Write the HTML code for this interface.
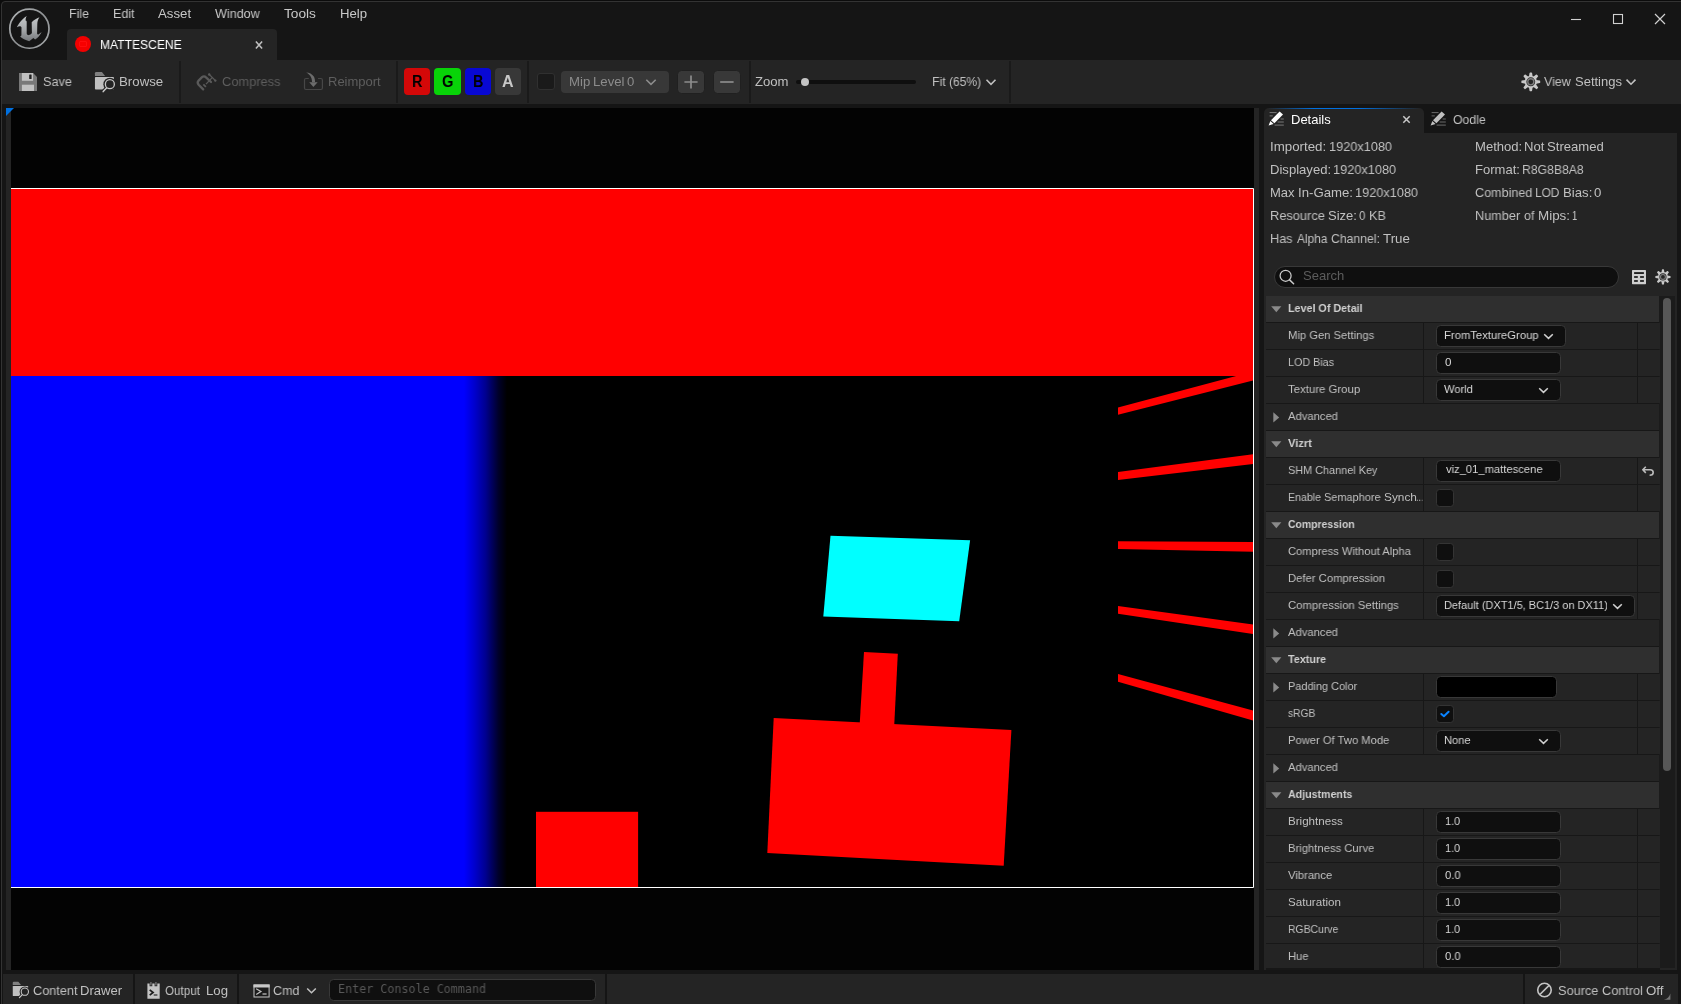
<!DOCTYPE html>
<html lang="en"><head><meta charset="utf-8"><title>MATTESCENE - Unreal Editor</title>
<style>
html,body{margin:0;padding:0;background:#151515;}
body{width:1681px;height:1004px;overflow:hidden;font-family:"Liberation Sans",sans-serif;}
#app{position:relative;width:1681px;height:1004px;overflow:hidden;background:#151515;}
.a{position:absolute;box-sizing:border-box;}
.t{position:absolute;will-change:transform;white-space:nowrap;line-height:1;transform-origin:0 0;font-family:"Liberation Sans",sans-serif;}
.t.b{font-weight:bold;}
.t.m{font-family:"DejaVu Sans Mono","Liberation Mono",monospace;}
svg{position:absolute;overflow:visible;}

</style></head>
<body>
<div id="app">
<!-- window frame -->
<div class="a" style="left:0px;top:0px;width:1681px;height:1004px;background:#0c0c0c;"></div>
<div class="a" style="left:1px;top:1px;width:1690px;height:1010px;background:#151515;border:1px solid #333;border-radius:4px 0 0 0;"></div>
<!-- logo -->
<svg style="left:8px;top:7px" width="43" height="43" viewBox="0 0 43 43">
<defs><linearGradient id="lg" x1="0" y1="0" x2="0" y2="1"><stop offset="0" stop-color="#c6c9cb"/><stop offset="0.55" stop-color="#a4a7a9"/><stop offset="1" stop-color="#74777a"/></linearGradient>
<linearGradient id="lc" x1="0" y1="0" x2="1" y2="1"><stop offset="0" stop-color="#b4b7b9"/><stop offset="0.5" stop-color="#8e9193"/><stop offset="1" stop-color="#a6a9ab"/></linearGradient></defs>
<circle cx="21.4" cy="21.65" r="19.6" fill="none" stroke="url(#lc)" stroke-width="1.7"/>
<path d="M8.9 20.2 C10.2 17.6 13.6 12.2 18.7 9.1 C17.8 10.6 17.5 12.2 17.7 13.7 C18.5 13.5 18.7 14.2 18.7 15 L18.7 26.4 C19 27.6 20 28.3 20.9 28.1 C22 27.9 23.9 26.6 23.9 25.9 L23.7 15.2 C25.5 13.4 28.4 11.2 31.5 10.2 C30 12.2 29.3 14.6 29.3 16.9 L29.1 26.4 C29.2 27.6 30 27.8 30.8 27.2 L33.6 25.1 C32.2 28.4 29.6 31.2 27.1 32.6 L25.4 31.1 L21.2 34.3 C17.6 33.4 14.2 31.6 12.2 29.6 L13.4 28.6 L13.5 20.7 C13.5 19.2 11.4 18.6 8.9 20.2 Z" fill="url(#lg)"/>
</svg>
<!-- menu -->
<span class="t" style="left:69.0px;top:7.1px;font-size:13px;color:#c8c8c8;transform:scaleX(0.9567);">File</span>
<span class="t" style="left:112.8px;top:7.1px;font-size:13px;color:#c8c8c8;transform:scaleX(0.9630);">Edit</span>
<span class="t" style="left:158.0px;top:7.1px;font-size:13px;color:#c8c8c8;transform:scaleX(1.0174);">Asset</span>
<span class="t" style="left:214.8px;top:7.1px;font-size:13px;color:#c8c8c8;transform:scaleX(0.9687);">Window</span>
<span class="t" style="left:283.7px;top:7.1px;font-size:13px;color:#c8c8c8;transform:scaleX(1.0526);">Tools</span>
<span class="t" style="left:339.6px;top:7.1px;font-size:13px;color:#c8c8c8;transform:scaleX(1.0137);">Help</span>
<svg style="left:1565px;top:8px" width="110" height="24" viewBox="1565 8 110 24" fill="none" stroke="#d0d0d0" stroke-width="1.1">
<path d="M1571 19.5H1581"/>
<rect x="1613.5" y="14.5" width="9" height="9"/>
<path d="M1655 14L1665 24M1665 14L1655 24" stroke-width="1.2"/>
</svg>
<!-- asset tab -->
<div class="a" style="left:67px;top:29px;width:210px;height:32px;background:#242424;border-radius:4px 4px 0 0;"></div>
<div class="a" style="left:74.9px;top:35.9px;width:16.1px;height:16.1px;background:#f20000;border-radius:50%;"></div>
<div class="a" style="left:79px;top:40.5px;width:8px;height:6.5px;background:#f80000;border:1px solid #ff0c0c;border-radius:1px;"></div>
<span class="t" style="left:100.0px;top:37.8px;font-size:13px;color:#ffffff;transform:scaleX(0.9295);">MATTESCENE</span>
<svg style="left:254px;top:39.5px" width="10" height="10" viewBox="0 0 10 10"><path d="M1.9 1.5L8.1 8.5M8.1 1.5L1.9 8.5" stroke="#c0c0c0" stroke-width="1.55" fill="none"/></svg>
<!-- toolbar -->
<div class="a" style="left:2px;top:60px;width:1679px;height:44px;background:#242424;"></div>
<div class="a" style="left:179px;top:61px;width:2px;height:42px;background:#1a1a1a;"></div>
<div class="a" style="left:396px;top:61px;width:2px;height:42px;background:#1a1a1a;"></div>
<div class="a" style="left:527px;top:61px;width:2px;height:42px;background:#1a1a1a;"></div>
<div class="a" style="left:749px;top:61px;width:2px;height:42px;background:#1a1a1a;"></div>
<div class="a" style="left:1009px;top:61px;width:2px;height:42px;background:#1a1a1a;"></div>
<svg style="left:19px;top:73px" width="18" height="18" viewBox="0 0 18 18">
<path d="M0 0H14.1L18 4V18H0Z" fill="#787878"/>
<rect x="2.9" y="0" width="11.2" height="7.8" fill="#c0c0c0"/>
<rect x="10.2" y="1.4" width="2.4" height="4.5" rx="0.5" fill="#202020"/>
<rect x="2.9" y="11.7" width="12.1" height="6.3" fill="#c0c0c0"/>
</svg>
<span class="t" style="left:42.5px;top:75.0px;font-size:13px;color:#c0c0c0;transform:scaleX(0.9730);">Save</span>
<svg style="left:94px;top:71px" width="22" height="22" viewBox="0 0 22 22">
<path d="M0.95 4.9V2.2Q0.95 1 2.2 1H7.9L11.1 4.9Z" fill="#808080"/>
<rect x="0.95" y="6.05" width="18.95" height="12.55" rx="0.8" fill="#c0c0c0"/>
<circle cx="15.87" cy="13.22" r="6.5" fill="#242424"/>
<path d="M12.6 17L9 20.8" stroke="#242424" stroke-width="3.8" stroke-linecap="round"/>
<circle cx="15.87" cy="13.22" r="4.5" fill="none" stroke="#c8c8c8" stroke-width="1.3"/>
<path d="M12.5 17.1L9.2 20.6" stroke="#c8c8c8" stroke-width="1.5" stroke-linecap="round"/>
</svg>
<span class="t" style="left:118.7px;top:75.0px;font-size:13px;color:#c0c0c0;transform:scaleX(1.0208);">Browse</span>
<svg style="left:196px;top:72px" width="22" height="19" viewBox="0 0 22 19" fill="none" stroke="#5a5a5a">
<path d="M15 10L10 5.4C8.8 4.2 7.2 4.2 6 5.2L2.6 8.6C1.4 10 1.4 11.4 2.6 12.8L7.2 17.4" stroke-width="2.3" stroke-linecap="round"/>
<path d="M10 12.1L16.2 5.6" stroke-width="1.3"/>
<path d="M7.3 12.4L9.9 14.8" stroke-width="1.8"/>
<path d="M12.8 2L19.8 9" stroke-width="1.1"/>
<circle cx="13.2" cy="2.5" r="1.2" fill="#5a5a5a" stroke="none"/><circle cx="19.3" cy="8.6" r="1.2" fill="#5a5a5a" stroke="none"/>
</svg>
<span class="t" style="left:221.5px;top:75.0px;font-size:13px;color:#5e5e5e;transform:scaleX(0.9872);">Compress</span>
<svg style="left:303px;top:71px" width="21" height="20" viewBox="0 0 21 20" fill="none">
<path d="M5.75 7.5H3C2 7.5 1.5 8 1.5 9V17C1.5 18 2 18.5 3 18.5H17.9C18.9 18.5 19.4 18 19.4 17V9C19.4 8 18.9 7.5 17.9 7.5H15" stroke="#474747" stroke-width="1.2"/>
<path d="M3.07 1.42C6 1.4 9.34 3 10.8 5.6C11.8 7.4 12.03 9 12.03 11.3L9.04 11.3C9 8.6 8.4 6.4 7 4.6C6 3.2 4.6 2 3.07 1.42Z" fill="#6c6c6c"/>
<path d="M6.2 11.2H14.6L10.4 16.1Z" fill="#6c6c6c"/>
</svg>
<span class="t" style="left:328.0px;top:75.0px;font-size:13px;color:#5e5e5e;transform:scaleX(0.9914);">Reimport</span>
<div class="a" style="left:404px;top:68px;width:26px;height:27px;background:#d40808;border-radius:4px;"></div>
<div class="a" style="left:434px;top:68px;width:27px;height:27px;background:#08d408;border-radius:4px;"></div>
<div class="a" style="left:465px;top:68px;width:26px;height:27px;background:#0808d4;border-radius:4px;"></div>
<div class="a" style="left:495px;top:68px;width:26px;height:27px;background:#383838;border-radius:4px;"></div>
<span class="t b" style="left:411.9px;top:73.7px;font-size:16px;color:#000;transform:scaleX(0.9020);">R</span>
<span class="t b" style="left:442.1px;top:73.7px;font-size:16px;color:#000;transform:scaleX(0.9133);">G</span>
<span class="t b" style="left:473.1px;top:73.7px;font-size:16px;color:#000;transform:scaleX(0.8980);">B</span>
<span class="t b" style="left:502.4px;top:73.7px;font-size:16px;color:#c8c8c8;transform:scaleX(0.9665);">A</span>
<div class="a" style="left:537.2px;top:73.3px;width:17.4px;height:17.2px;background:#1a1a1a;border:1px solid #303030;border-radius:3px;"></div>
<div class="a" style="left:561px;top:71px;width:108px;height:22px;background:#383838;border-radius:4px;"></div>
<span class="t" style="left:568.6px;top:75.0px;font-size:13px;color:#8c8c8c;transform:scaleX(1.0119);">Mip</span><span class="t" style="left:592.8px;top:75.0px;font-size:13px;color:#8c8c8c;transform:scaleX(1.0142);">Level</span><span class="t" style="left:627.0px;top:75.0px;font-size:13px;color:#8c8c8c;transform:scaleX(1.0096);">0</span>
<svg style="left:645px;top:78px" width="12" height="8" viewBox="0 0 12 8"><path d="M1.3 1.8L6 6.4L10.7 1.8" fill="none" stroke="#8c8c8c" stroke-width="1.6"/></svg>
<div class="a" style="left:677px;top:69.8px;width:28px;height:24.4px;background:#383838;border:1px solid #202020;border-radius:4.5px;"></div>
<div class="a" style="left:713px;top:69.8px;width:28px;height:24.4px;background:#383838;border:1px solid #202020;border-radius:4.5px;"></div>
<svg style="left:684px;top:75px" width="14" height="14" viewBox="0 0 14 14"><path d="M7 0.4V13.6M0.4 7H13.6" stroke="#8c8c8c" stroke-width="1.7" fill="none"/></svg>
<svg style="left:720px;top:75px" width="14" height="14" viewBox="0 0 14 14"><path d="M0.2 7H13.6" stroke="#8c8c8c" stroke-width="1.7" fill="none"/></svg>
<span class="t" style="left:755.3px;top:75.1px;font-size:13px;color:#c0c0c0;transform:scaleX(1.0100);">Zoom</span>
<div class="a" style="left:796px;top:80px;width:120px;height:4px;background:#0f0f0f;border-radius:2px;"></div>
<div class="a" style="left:800.6px;top:77.6px;width:8.6px;height:8.6px;background:#c4c4c4;border-radius:50%;"></div>
<span class="t" style="left:931.6px;top:75.1px;font-size:13px;color:#c0c0c0;transform:scaleX(0.9531);">Fit</span><span class="t" style="left:949.2px;top:75.1px;font-size:13px;color:#c0c0c0;transform:scaleX(0.9270);">(65%)</span>
<svg style="left:985px;top:78px" width="12" height="8" viewBox="0 0 12 8"><path d="M1.5 1.8L6 6.3L10.5 1.8" fill="none" stroke="#c0c0c0" stroke-width="1.6"/></svg>
<svg style="left:1520.6px;top:72.15px" width="19.6" height="19.6" viewBox="-10 -10 20 20">
<g fill="#c8c8c8"><path d="M-1.9 -5.4L-1.3 -9.1Q-1.25 -9.6 -0.7 -9.6H0.7Q1.25 -9.6 1.3 -9.1L1.9 -5.4Z" transform="rotate(0)"/><path d="M-1.9 -5.4L-1.3 -9.1Q-1.25 -9.6 -0.7 -9.6H0.7Q1.25 -9.6 1.3 -9.1L1.9 -5.4Z" transform="rotate(45)"/><path d="M-1.9 -5.4L-1.3 -9.1Q-1.25 -9.6 -0.7 -9.6H0.7Q1.25 -9.6 1.3 -9.1L1.9 -5.4Z" transform="rotate(90)"/><path d="M-1.9 -5.4L-1.3 -9.1Q-1.25 -9.6 -0.7 -9.6H0.7Q1.25 -9.6 1.3 -9.1L1.9 -5.4Z" transform="rotate(135)"/><path d="M-1.9 -5.4L-1.3 -9.1Q-1.25 -9.6 -0.7 -9.6H0.7Q1.25 -9.6 1.3 -9.1L1.9 -5.4Z" transform="rotate(180)"/><path d="M-1.9 -5.4L-1.3 -9.1Q-1.25 -9.6 -0.7 -9.6H0.7Q1.25 -9.6 1.3 -9.1L1.9 -5.4Z" transform="rotate(225)"/><path d="M-1.9 -5.4L-1.3 -9.1Q-1.25 -9.6 -0.7 -9.6H0.7Q1.25 -9.6 1.3 -9.1L1.9 -5.4Z" transform="rotate(270)"/><path d="M-1.9 -5.4L-1.3 -9.1Q-1.25 -9.6 -0.7 -9.6H0.7Q1.25 -9.6 1.3 -9.1L1.9 -5.4Z" transform="rotate(315)"/></g>
<circle r="5.4" fill="none" stroke="#c8c8c8" stroke-width="1.75"/>
<circle r="3.1" fill="none" stroke="#7e7e7e" stroke-width="1.4"/>
</svg>
<span class="t" style="left:1544.3px;top:75.1px;font-size:13px;color:#c0c0c0;transform:scaleX(0.9578);">View</span><span class="t" style="left:1575.3px;top:75.1px;font-size:13px;color:#c0c0c0;transform:scaleX(0.9932);">Settings</span>
<svg style="left:1625px;top:78px" width="12" height="8" viewBox="0 0 12 8"><path d="M1.5 1.6L6 6.2L10.5 1.6" fill="none" stroke="#c0c0c0" stroke-width="1.6"/></svg>
<!-- viewport panel -->
<div class="a" style="left:6px;top:108px;width:1253px;height:862px;background:#242424;"></div>
<svg style="left:11px;top:108px" width="1243" height="862" viewBox="11 108 1243 862" shape-rendering="geometricPrecision">
<defs><linearGradient id="bl" gradientUnits="userSpaceOnUse" x1="464" y1="0" x2="507" y2="0">
<stop offset="0" stop-color="#0000ff"/><stop offset="0.25" stop-color="#0000cc"/><stop offset="0.5" stop-color="#000090"/><stop offset="0.8" stop-color="#00002a"/><stop offset="1" stop-color="#000000"/></linearGradient></defs>
<rect x="11" y="108" width="1243" height="862" fill="#030303"/>
<rect x="11" y="189" width="1242" height="698" fill="#000000"/>
<rect x="11" y="376" width="500" height="511" fill="url(#bl)"/>
<rect x="11" y="189" width="1242" height="187" fill="#ff0000"/>
<polygon points="830.5,535.8 970.1,540.2 959.2,621.2 823.3,616.6" fill="#00ffff"/>
<polygon points="864,652.1 897.8,653.7 894.2,726 859.7,724" fill="#ff0000"/>
<polygon points="773.7,718 1011.4,729.9 1003.7,865.8 767.3,852.9" fill="#ff0000"/>
<rect x="536" y="811.8" width="102.1" height="76" fill="#ff0000"/>
<polygon points="1118,407.6 1253,371.4 1253,380.5 1118,414.8" fill="#ff0000"/>
<polygon points="1118,472 1253,454.3 1253,464 1118,480" fill="#ff0000"/>
<polygon points="1118,541.2 1253,541.9 1253,551.8 1118,548.9" fill="#ff0000"/>
<polygon points="1118,606.1 1253,624.5 1253,633.9 1118,613.8" fill="#ff0000"/>
<polygon points="1118,674 1253,710.6 1253,720.4 1118,681.7" fill="#ff0000"/>
<path d="M11 188.5H1253.5V887.5H11" fill="none" stroke="#ffffff" stroke-width="1"/>
</svg>
<svg style="left:6px;top:108px" width="8" height="8" viewBox="0 0 8 8"><path d="M0 0H8L0 8Z" fill="#0070e0"/></svg>
<!-- details panel -->
<div class="a" style="left:1264px;top:108px;width:160px;height:26px;background:#242424;border-radius:5px 5px 0 0;"></div>
<div class="a" style="left:1268px;top:108px;width:152px;height:1px;background:transparent;background:linear-gradient(90deg,rgba(0,112,224,0) 0,#0070e0 30%,#0070e0 60%,rgba(0,112,224,0) 100%);"></div>
<div class="a" style="left:1264px;top:133px;width:413px;height:837px;background:#242424;"></div>
<svg style="left:1268.2px;top:111.4px" width="17" height="16" viewBox="0 0 17 16">
<g stroke="#787878" stroke-width="1" fill="none"><path d="M1.6 1.6H8.6M1.6 4.9H4.8M12.6 8H15.8M9.6 11H15.8M6.6 14.1H15.8"/></g>
<path d="M11.6 0.6L15 3.6L6.4 12.2L3 9.2Z" fill="#ffffff"/>
<path d="M2.4 9.9L5.6 12.9L0.6 14.6Z" fill="#ffffff"/>
</svg>
<span class="t" style="left:1291.2px;top:112.7px;font-size:13px;color:#ffffff;transform:scaleX(0.9934);">Details</span>
<svg style="left:1402px;top:115px" width="9" height="9" viewBox="0 0 9 9"><path d="M1.3 1.3L7.7 7.7M7.7 1.3L1.3 7.7" stroke="#c8c8c8" stroke-width="1.5" fill="none"/></svg>
<svg style="left:1430.3px;top:111.4px" width="17" height="16" viewBox="0 0 17 16">
<g stroke="#6a6a6a" stroke-width="1" fill="none"><path d="M1.6 1.6H8.6M1.6 4.9H4.8M12.6 8H15.8M9.6 11H15.8M6.6 14.1H15.8"/></g>
<path d="M11.6 0.6L15 3.6L6.4 12.2L3 9.2Z" fill="#c0c0c0"/>
<path d="M2.4 9.9L5.6 12.9L0.6 14.6Z" fill="#c0c0c0"/>
</svg>
<span class="t" style="left:1453.0px;top:112.7px;font-size:13px;color:#c0c0c0;transform:scaleX(0.9451);">Oodle</span>
<span class="t" style="left:1269.6px;top:139.9px;font-size:13px;color:#c0c0c0;transform:scaleX(1.0222);">Imported:</span><span class="t" style="left:1328.5px;top:139.9px;font-size:13px;color:#c0c0c0;transform:scaleX(0.9792);">1920x1080</span>
<span class="t" style="left:1269.7px;top:162.9px;font-size:13px;color:#c0c0c0;transform:scaleX(1.0060);">Displayed:</span><span class="t" style="left:1333.4px;top:162.9px;font-size:13px;color:#c0c0c0;transform:scaleX(0.9808);">1920x1080</span>
<span class="t" style="left:1269.7px;top:185.9px;font-size:13px;color:#c0c0c0;transform:scaleX(0.9829);">Max</span><span class="t" style="left:1297.6px;top:185.9px;font-size:13px;color:#c0c0c0;transform:scaleX(1.0157);">In-Game:</span><span class="t" style="left:1355.4px;top:185.9px;font-size:13px;color:#c0c0c0;transform:scaleX(0.9792);">1920x1080</span>
<span class="t" style="left:1269.7px;top:208.9px;font-size:13px;color:#c0c0c0;transform:scaleX(0.9858);">Resource</span><span class="t" style="left:1328.1px;top:208.9px;font-size:13px;color:#c0c0c0;transform:scaleX(0.9857);">Size:</span><span class="t" style="left:1359.1px;top:208.9px;font-size:13px;color:#c0c0c0;transform:scaleX(0.8894);">0</span><span class="t" style="left:1368.7px;top:208.9px;font-size:13px;color:#c0c0c0;transform:scaleX(0.9691);">KB</span>
<span class="t" style="left:1269.7px;top:231.9px;font-size:13px;color:#c0c0c0;transform:scaleX(0.9740);">Has</span><span class="t" style="left:1296.6px;top:231.9px;font-size:13px;color:#c0c0c0;transform:scaleX(0.9150);">Alpha</span><span class="t" style="left:1331.4px;top:231.9px;font-size:13px;color:#c0c0c0;transform:scaleX(0.9410);">Channel:</span><span class="t" style="left:1383.1px;top:231.9px;font-size:13px;color:#c0c0c0;transform:scaleX(1.0250);">True</span>
<span class="t" style="left:1474.8px;top:139.9px;font-size:13px;color:#c0c0c0;transform:scaleX(1.0044);">Method:</span><span class="t" style="left:1523.7px;top:139.9px;font-size:13px;color:#c0c0c0;transform:scaleX(1.0047);">Not</span><span class="t" style="left:1547.1px;top:139.9px;font-size:13px;color:#c0c0c0;transform:scaleX(1.0090);">Streamed</span>
<span class="t" style="left:1474.8px;top:162.9px;font-size:13px;color:#c0c0c0;transform:scaleX(1.0018);">Format:</span><span class="t" style="left:1521.7px;top:162.9px;font-size:13px;color:#c0c0c0;transform:scaleX(0.9387);">R8G8B8A8</span>
<span class="t" style="left:1475.0px;top:185.9px;font-size:13px;color:#c0c0c0;transform:scaleX(0.9682);">Combined</span><span class="t" style="left:1535.0px;top:185.9px;font-size:13px;color:#c0c0c0;transform:scaleX(0.9127);">LOD</span><span class="t" style="left:1562.5px;top:185.9px;font-size:13px;color:#c0c0c0;transform:scaleX(1.0138);">Bias:</span><span class="t" style="left:1594.1px;top:185.9px;font-size:13px;color:#c0c0c0;transform:scaleX(1.0176);">0</span>
<span class="t" style="left:1474.8px;top:208.9px;font-size:13px;color:#c0c0c0;transform:scaleX(0.9749);">Number</span><span class="t" style="left:1524.1px;top:208.9px;font-size:13px;color:#c0c0c0;transform:scaleX(0.9531);">of</span><span class="t" style="left:1537.7px;top:208.9px;font-size:13px;color:#c0c0c0;transform:scaleX(1.0308);">Mips:</span><span class="t" style="left:1572.4px;top:208.9px;font-size:13px;color:#c0c0c0;transform:scaleX(0.7203);">1</span>
<div class="a" style="left:1274px;top:266px;width:344.8px;height:22px;background:#0f0f0f;border:1px solid #383838;border-radius:11px;"></div>
<svg style="left:1279px;top:269px" width="16" height="16" viewBox="0 0 16 16"><circle cx="6.6" cy="6.75" r="5.5" fill="none" stroke="#cacaca" stroke-width="1.25"/><path d="M10.6 10.9L14.6 14.8" stroke="#cacaca" stroke-width="1.5" stroke-linecap="round"/></svg>
<span class="t" style="left:1302.5px;top:268.8px;font-size:13px;color:#5c5c5c;transform:scaleX(1.0030);">Search</span>
<svg style="left:1632px;top:270px" width="14" height="14.2" viewBox="0 0 14 14.2"><rect x="0" y="0" width="14" height="14.2" rx="0.6" fill="#cfcfcf"/><g fill="#0c0c0c"><rect x="2.1" y="2.2" width="9.8" height="1.7"/><rect x="2.1" y="6.2" width="3.7" height="1.6"/><rect x="8.1" y="6.2" width="3.8" height="1.6"/><rect x="2.1" y="10.2" width="3.7" height="1.6"/><rect x="8.1" y="10.2" width="3.8" height="1.6"/></g></svg>
<svg style="left:1655.05px;top:268.65px" width="15.9" height="15.9" viewBox="-10 -10 20 20">
<g fill="#c8c8c8"><path d="M-1.9 -5.4L-1.3 -9.1Q-1.25 -9.6 -0.7 -9.6H0.7Q1.25 -9.6 1.3 -9.1L1.9 -5.4Z" transform="rotate(0)"/><path d="M-1.9 -5.4L-1.3 -9.1Q-1.25 -9.6 -0.7 -9.6H0.7Q1.25 -9.6 1.3 -9.1L1.9 -5.4Z" transform="rotate(45)"/><path d="M-1.9 -5.4L-1.3 -9.1Q-1.25 -9.6 -0.7 -9.6H0.7Q1.25 -9.6 1.3 -9.1L1.9 -5.4Z" transform="rotate(90)"/><path d="M-1.9 -5.4L-1.3 -9.1Q-1.25 -9.6 -0.7 -9.6H0.7Q1.25 -9.6 1.3 -9.1L1.9 -5.4Z" transform="rotate(135)"/><path d="M-1.9 -5.4L-1.3 -9.1Q-1.25 -9.6 -0.7 -9.6H0.7Q1.25 -9.6 1.3 -9.1L1.9 -5.4Z" transform="rotate(180)"/><path d="M-1.9 -5.4L-1.3 -9.1Q-1.25 -9.6 -0.7 -9.6H0.7Q1.25 -9.6 1.3 -9.1L1.9 -5.4Z" transform="rotate(225)"/><path d="M-1.9 -5.4L-1.3 -9.1Q-1.25 -9.6 -0.7 -9.6H0.7Q1.25 -9.6 1.3 -9.1L1.9 -5.4Z" transform="rotate(270)"/><path d="M-1.9 -5.4L-1.3 -9.1Q-1.25 -9.6 -0.7 -9.6H0.7Q1.25 -9.6 1.3 -9.1L1.9 -5.4Z" transform="rotate(315)"/></g>
<circle r="5.4" fill="none" stroke="#c8c8c8" stroke-width="1.75"/>
<circle r="3.1" fill="none" stroke="#7e7e7e" stroke-width="1.4"/>
</svg>
<div class="a" style="left:1266px;top:296px;width:394px;height:674px;background:#171717;"></div>
<div class="a" style="left:1659px;top:296px;width:16px;height:672px;background:#1b1b1b;"></div>
<div class="a" style="left:1663px;top:298px;width:8px;height:473px;background:#575757;border-radius:4px;"></div>
<div class="a" style="left:1266px;top:296px;width:393px;height:26px;background:#2f2f2f;"></div>
<svg style="left:1271px;top:306px" width="11" height="7" viewBox="0 0 11 7"><path d="M0.2 0.3H10.4L5.3 6.3Z" fill="#8a8a8a"/></svg>
<span class="t b" style="left:1287.8px;top:302.1px;font-size:11.6px;color:#d0d0d0;transform:scaleX(0.9263);">Level Of Detail</span>
<div class="a" style="left:1266px;top:323px;width:157px;height:26px;background:#242424;"></div>
<div class="a" style="left:1424px;top:323px;width:213px;height:26px;background:#242424;"></div>
<div class="a" style="left:1638px;top:323px;width:22px;height:26px;background:#242424;"></div>
<span class="t" style="left:1287.6px;top:329.1px;font-size:11.6px;color:#c0c0c0;transform:scaleX(0.9688);">Mip Gen Settings</span>
<div class="a" style="left:1436px;top:325px;width:129.69999999999996px;height:22px;background:#0f0f0f;border:1px solid #383838;border-radius:4.5px;"></div>
<span class="t" style="left:1443.9px;top:329.1px;font-size:11.6px;color:#d8d8d8;transform:scaleX(0.9726);">FromTextureGroup</span>
<svg style="left:1543px;top:333px" width="11" height="7" viewBox="0 0 11 7"><path d="M1.2 1.2L5.5 5.4L9.8 1.2" fill="none" stroke="#d0d0d0" stroke-width="1.5"/></svg>
<div class="a" style="left:1266px;top:350px;width:157px;height:26px;background:#242424;"></div>
<div class="a" style="left:1424px;top:350px;width:213px;height:26px;background:#242424;"></div>
<div class="a" style="left:1638px;top:350px;width:22px;height:26px;background:#242424;"></div>
<span class="t" style="left:1287.6px;top:356.1px;font-size:11.6px;color:#c0c0c0;transform:scaleX(0.9293);">LOD Bias</span>
<div class="a" style="left:1436px;top:352px;width:124.99999999999991px;height:22px;background:#0f0f0f;border:1px solid #383838;border-radius:4.5px;"></div>
<span class="t" style="left:1445.1px;top:356.1px;font-size:11.6px;color:#d8d8d8;transform:scaleX(0.9878);">0</span>
<div class="a" style="left:1266px;top:377px;width:157px;height:26px;background:#242424;"></div>
<div class="a" style="left:1424px;top:377px;width:213px;height:26px;background:#242424;"></div>
<div class="a" style="left:1638px;top:377px;width:22px;height:26px;background:#242424;"></div>
<span class="t" style="left:1287.6px;top:383.1px;font-size:11.6px;color:#c0c0c0;transform:scaleX(0.9837);">Texture Group</span>
<div class="a" style="left:1436px;top:379px;width:124.99999999999991px;height:22px;background:#0f0f0f;border:1px solid #383838;border-radius:4.5px;"></div>
<span class="t" style="left:1443.8px;top:383.1px;font-size:11.6px;color:#d8d8d8;transform:scaleX(0.9618);">World</span>
<svg style="left:1538px;top:387px" width="11" height="7" viewBox="0 0 11 7"><path d="M1.2 1.2L5.5 5.4L9.8 1.2" fill="none" stroke="#d0d0d0" stroke-width="1.5"/></svg>
<div class="a" style="left:1266px;top:404px;width:393px;height:26px;background:#242424;"></div>
<svg style="left:1272.6px;top:411.5px" width="7" height="11" viewBox="0 0 7 11"><path d="M0.3 0.3L6.2 5.4L0.3 10.5Z" fill="#8a8a8a"/></svg>
<span class="t" style="left:1287.8px;top:410.1px;font-size:11.6px;color:#c0c0c0;transform:scaleX(0.9692);">Advanced</span>
<div class="a" style="left:1266px;top:431px;width:393px;height:26px;background:#2f2f2f;"></div>
<svg style="left:1271px;top:441px" width="11" height="7" viewBox="0 0 11 7"><path d="M0.2 0.3H10.4L5.3 6.3Z" fill="#8a8a8a"/></svg>
<span class="t b" style="left:1287.7px;top:437.1px;font-size:11.6px;color:#d0d0d0;transform:scaleX(0.9621);">Vizrt</span>
<div class="a" style="left:1266px;top:458px;width:157px;height:26px;background:#242424;"></div>
<div class="a" style="left:1424px;top:458px;width:213px;height:26px;background:#242424;"></div>
<div class="a" style="left:1638px;top:458px;width:22px;height:26px;background:#242424;"></div>
<span class="t" style="left:1288.0px;top:464.1px;font-size:11.6px;color:#c0c0c0;transform:scaleX(0.9377);">SHM Channel Key</span>
<div class="a" style="left:1436px;top:460px;width:124.99999999999991px;height:22px;background:#0f0f0f;border:1px solid #383838;border-radius:4.5px;"></div>
<span class="t" style="left:1445.6px;top:463.3px;font-size:11.6px;color:#d8d8d8;transform:scaleX(0.9667);">viz_01_mattescene</span>
<svg style="left:1642px;top:466px" width="13" height="11" viewBox="0 0 13 11"><path d="M3.8 0.7L0.8 3.8L3.8 6.9M1.1 3.8H8.2C10.1 3.8 11.2 5 11.2 6.6C11.2 8.2 10 9.3 7.6 9.3" fill="none" stroke="#bcbcbc" stroke-width="1.6" stroke-linejoin="round"/></svg>
<div class="a" style="left:1266px;top:485px;width:157px;height:26px;background:#242424;"></div>
<div class="a" style="left:1424px;top:485px;width:213px;height:26px;background:#242424;"></div>
<div class="a" style="left:1638px;top:485px;width:22px;height:26px;background:#242424;"></div>
<span class="t" style="left:1287.8px;top:491.1px;font-size:11.6px;color:#c0c0c0;transform:scaleX(0.9111);">Enable</span><span class="t" style="left:1324.0px;top:491.1px;font-size:11.6px;color:#c0c0c0;transform:scaleX(0.9431);">Semaphore</span><span class="t" style="left:1384.0px;top:491.1px;font-size:11.6px;color:#c0c0c0;transform:scaleX(1.0203);">Synch</span><span class="t" style="left:1416.4px;top:491.1px;font-size:11.6px;color:#c0c0c0;transform:scaleX(0.6377);">…</span>
<div class="a" style="left:1436px;top:489px;width:18px;height:18px;background:#0f0f0f;border:1px solid #343434;border-radius:3.5px;"></div>
<div class="a" style="left:1266px;top:512px;width:393px;height:26px;background:#2f2f2f;"></div>
<svg style="left:1271px;top:522px" width="11" height="7" viewBox="0 0 11 7"><path d="M0.2 0.3H10.4L5.3 6.3Z" fill="#8a8a8a"/></svg>
<span class="t b" style="left:1288.1px;top:518.1px;font-size:11.6px;color:#d0d0d0;transform:scaleX(0.8991);">Compression</span>
<div class="a" style="left:1266px;top:539px;width:157px;height:26px;background:#242424;"></div>
<div class="a" style="left:1424px;top:539px;width:213px;height:26px;background:#242424;"></div>
<div class="a" style="left:1638px;top:539px;width:22px;height:26px;background:#242424;"></div>
<span class="t" style="left:1287.9px;top:545.1px;font-size:11.6px;color:#c0c0c0;transform:scaleX(0.9622);">Compress Without Alpha</span>
<div class="a" style="left:1436px;top:543px;width:18px;height:18px;background:#0f0f0f;border:1px solid #343434;border-radius:3.5px;"></div>
<div class="a" style="left:1266px;top:566px;width:157px;height:26px;background:#242424;"></div>
<div class="a" style="left:1424px;top:566px;width:213px;height:26px;background:#242424;"></div>
<div class="a" style="left:1638px;top:566px;width:22px;height:26px;background:#242424;"></div>
<span class="t" style="left:1287.6px;top:572.1px;font-size:11.6px;color:#c0c0c0;transform:scaleX(0.9720);">Defer Compression</span>
<div class="a" style="left:1436px;top:570px;width:18px;height:18px;background:#0f0f0f;border:1px solid #343434;border-radius:3.5px;"></div>
<div class="a" style="left:1266px;top:593px;width:157px;height:26px;background:#242424;"></div>
<div class="a" style="left:1424px;top:593px;width:213px;height:26px;background:#242424;"></div>
<div class="a" style="left:1638px;top:593px;width:22px;height:26px;background:#242424;"></div>
<span class="t" style="left:1287.9px;top:599.1px;font-size:11.6px;color:#c0c0c0;transform:scaleX(0.9770);">Compression Settings</span>
<div class="a" style="left:1436px;top:595px;width:198.69999999999996px;height:22px;background:#0f0f0f;border:1px solid #383838;border-radius:4.5px;"></div>
<span class="t" style="left:1443.7px;top:599.1px;font-size:11.6px;color:#d8d8d8;transform:scaleX(0.9465);">Default (DXT1/5, BC1/3 on DX11)</span><div class="a" style="left:1607.4px;top:597.3px;width:5px;height:15.6px;background:#0f0f0f;"></div>
<svg style="left:1611.8px;top:603px" width="11" height="7" viewBox="0 0 11 7"><path d="M1.2 1.2L5.5 5.4L9.8 1.2" fill="none" stroke="#d0d0d0" stroke-width="1.5"/></svg>
<div class="a" style="left:1266px;top:620px;width:393px;height:26px;background:#242424;"></div>
<svg style="left:1272.6px;top:627.5px" width="7" height="11" viewBox="0 0 7 11"><path d="M0.3 0.3L6.2 5.4L0.3 10.5Z" fill="#8a8a8a"/></svg>
<span class="t" style="left:1287.8px;top:626.1px;font-size:11.6px;color:#c0c0c0;transform:scaleX(0.9692);">Advanced</span>
<div class="a" style="left:1266px;top:647px;width:393px;height:26px;background:#2f2f2f;"></div>
<svg style="left:1271px;top:657px" width="11" height="7" viewBox="0 0 11 7"><path d="M0.2 0.3H10.4L5.3 6.3Z" fill="#8a8a8a"/></svg>
<span class="t b" style="left:1287.7px;top:653.1px;font-size:11.6px;color:#d0d0d0;transform:scaleX(0.9299);">Texture</span>
<div class="a" style="left:1266px;top:674px;width:157px;height:26px;background:#242424;"></div>
<div class="a" style="left:1424px;top:674px;width:213px;height:26px;background:#242424;"></div>
<div class="a" style="left:1638px;top:674px;width:22px;height:26px;background:#242424;"></div>
<svg style="left:1272.6px;top:681.5px" width="7" height="11" viewBox="0 0 7 11"><path d="M0.3 0.3L6.2 5.4L0.3 10.5Z" fill="#8a8a8a"/></svg>
<span class="t" style="left:1287.6px;top:680.1px;font-size:11.6px;color:#c0c0c0;transform:scaleX(0.9418);">Padding Color</span>
<div class="a" style="left:1436px;top:676px;width:121px;height:22px;background:#000000;border:1px solid #383838;border-radius:4.5px;"></div>
<div class="a" style="left:1266px;top:701px;width:157px;height:26px;background:#242424;"></div>
<div class="a" style="left:1424px;top:701px;width:213px;height:26px;background:#242424;"></div>
<div class="a" style="left:1638px;top:701px;width:22px;height:26px;background:#242424;"></div>
<span class="t" style="left:1288.2px;top:707.1px;font-size:11.6px;color:#c0c0c0;transform:scaleX(0.8829);">sRGB</span>
<div class="a" style="left:1436px;top:705px;width:18px;height:18px;background:#0f0f0f;border:1px solid #343434;border-radius:3.5px;"></div><svg style="left:1440px;top:709px" width="10" height="9" viewBox="0 0 10 9"><path d="M1.3 5L3.9 7.2L8.6 2.7" fill="none" stroke="#0a84ff" stroke-width="2" stroke-linecap="round" stroke-linejoin="round"/></svg>
<div class="a" style="left:1266px;top:728px;width:157px;height:26px;background:#242424;"></div>
<div class="a" style="left:1424px;top:728px;width:213px;height:26px;background:#242424;"></div>
<div class="a" style="left:1638px;top:728px;width:22px;height:26px;background:#242424;"></div>
<span class="t" style="left:1287.6px;top:734.1px;font-size:11.6px;color:#c0c0c0;transform:scaleX(0.9667);">Power Of Two Mode</span>
<div class="a" style="left:1436px;top:730px;width:124.99999999999991px;height:22px;background:#0f0f0f;border:1px solid #383838;border-radius:4.5px;"></div>
<span class="t" style="left:1443.6px;top:734.1px;font-size:11.6px;color:#d8d8d8;transform:scaleX(0.9619);">None</span>
<svg style="left:1538px;top:738px" width="11" height="7" viewBox="0 0 11 7"><path d="M1.2 1.2L5.5 5.4L9.8 1.2" fill="none" stroke="#d0d0d0" stroke-width="1.5"/></svg>
<div class="a" style="left:1266px;top:755px;width:393px;height:26px;background:#242424;"></div>
<svg style="left:1272.6px;top:762.5px" width="7" height="11" viewBox="0 0 7 11"><path d="M0.3 0.3L6.2 5.4L0.3 10.5Z" fill="#8a8a8a"/></svg>
<span class="t" style="left:1287.8px;top:761.1px;font-size:11.6px;color:#c0c0c0;transform:scaleX(0.9692);">Advanced</span>
<div class="a" style="left:1266px;top:782px;width:393px;height:26px;background:#2f2f2f;"></div>
<svg style="left:1271px;top:792px" width="11" height="7" viewBox="0 0 11 7"><path d="M0.2 0.3H10.4L5.3 6.3Z" fill="#8a8a8a"/></svg>
<span class="t b" style="left:1287.5px;top:788.1px;font-size:11.6px;color:#d0d0d0;transform:scaleX(0.9164);">Adjustments</span>
<div class="a" style="left:1266px;top:809px;width:157px;height:26px;background:#242424;"></div>
<div class="a" style="left:1424px;top:809px;width:213px;height:26px;background:#242424;"></div>
<div class="a" style="left:1638px;top:809px;width:22px;height:26px;background:#242424;"></div>
<span class="t" style="left:1287.6px;top:815.1px;font-size:11.6px;color:#c0c0c0;transform:scaleX(0.9911);">Brightness</span>
<div class="a" style="left:1436px;top:811px;width:124.99999999999991px;height:22px;background:#0f0f0f;border:1px solid #383838;border-radius:4.5px;"></div>
<span class="t" style="left:1445.1px;top:815.1px;font-size:11.6px;color:#d8d8d8;transform:scaleX(0.9380);">1.0</span>
<div class="a" style="left:1266px;top:836px;width:157px;height:26px;background:#242424;"></div>
<div class="a" style="left:1424px;top:836px;width:213px;height:26px;background:#242424;"></div>
<div class="a" style="left:1638px;top:836px;width:22px;height:26px;background:#242424;"></div>
<span class="t" style="left:1287.6px;top:842.1px;font-size:11.6px;color:#c0c0c0;transform:scaleX(0.9709);">Brightness Curve</span>
<div class="a" style="left:1436px;top:838px;width:124.99999999999991px;height:22px;background:#0f0f0f;border:1px solid #383838;border-radius:4.5px;"></div>
<span class="t" style="left:1445.1px;top:842.1px;font-size:11.6px;color:#d8d8d8;transform:scaleX(0.9380);">1.0</span>
<div class="a" style="left:1266px;top:863px;width:157px;height:26px;background:#242424;"></div>
<div class="a" style="left:1424px;top:863px;width:213px;height:26px;background:#242424;"></div>
<div class="a" style="left:1638px;top:863px;width:22px;height:26px;background:#242424;"></div>
<span class="t" style="left:1287.8px;top:869.1px;font-size:11.6px;color:#c0c0c0;transform:scaleX(0.9725);">Vibrance</span>
<div class="a" style="left:1436px;top:865px;width:124.99999999999991px;height:22px;background:#0f0f0f;border:1px solid #383838;border-radius:4.5px;"></div>
<span class="t" style="left:1444.7px;top:869.1px;font-size:11.6px;color:#d8d8d8;transform:scaleX(0.9637);">0.0</span>
<div class="a" style="left:1266px;top:890px;width:157px;height:26px;background:#242424;"></div>
<div class="a" style="left:1424px;top:890px;width:213px;height:26px;background:#242424;"></div>
<div class="a" style="left:1638px;top:890px;width:22px;height:26px;background:#242424;"></div>
<span class="t" style="left:1288.0px;top:896.1px;font-size:11.6px;color:#c0c0c0;transform:scaleX(0.9957);">Saturation</span>
<div class="a" style="left:1436px;top:892px;width:124.99999999999991px;height:22px;background:#0f0f0f;border:1px solid #383838;border-radius:4.5px;"></div>
<span class="t" style="left:1445.1px;top:896.1px;font-size:11.6px;color:#d8d8d8;transform:scaleX(0.9380);">1.0</span>
<div class="a" style="left:1266px;top:917px;width:157px;height:26px;background:#242424;"></div>
<div class="a" style="left:1424px;top:917px;width:213px;height:26px;background:#242424;"></div>
<div class="a" style="left:1638px;top:917px;width:22px;height:26px;background:#242424;"></div>
<span class="t" style="left:1287.7px;top:923.1px;font-size:11.6px;color:#c0c0c0;transform:scaleX(0.8987);">RGBCurve</span>
<div class="a" style="left:1436px;top:919px;width:124.99999999999991px;height:22px;background:#0f0f0f;border:1px solid #383838;border-radius:4.5px;"></div>
<span class="t" style="left:1445.1px;top:923.1px;font-size:11.6px;color:#d8d8d8;transform:scaleX(0.9380);">1.0</span>
<div class="a" style="left:1266px;top:944px;width:157px;height:24px;background:#242424;"></div>
<div class="a" style="left:1424px;top:944px;width:213px;height:24px;background:#242424;"></div>
<div class="a" style="left:1638px;top:944px;width:22px;height:24px;background:#242424;"></div>
<span class="t" style="left:1287.6px;top:950.1px;font-size:11.6px;color:#c0c0c0;transform:scaleX(0.9679);">Hue</span>
<div class="a" style="left:1436px;top:946px;width:124.99999999999991px;height:22px;background:#0f0f0f;border:1px solid #383838;border-radius:4.5px;"></div>
<span class="t" style="left:1444.7px;top:950.1px;font-size:11.6px;color:#d8d8d8;transform:scaleX(0.9637);">0.0</span>
<!-- status bar -->
<div class="a" style="left:3px;top:974px;width:1675px;height:30px;background:#242424;"></div>
<div class="a" style="left:133px;top:974px;width:2px;height:30px;background:#151515;"></div>
<div class="a" style="left:237px;top:974px;width:2px;height:30px;background:#151515;"></div>
<div class="a" style="left:605px;top:974px;width:2px;height:30px;background:#151515;"></div>
<div class="a" style="left:1523.4px;top:974px;width:2px;height:30px;background:#151515;"></div>
<svg style="left:12px;top:981.1px" width="17.8" height="17.8" viewBox="0 0 22 22">
<path d="M0.95 4.9V2.2Q0.95 1 2.2 1H7.9L11.1 4.9Z" fill="#808080"/>
<rect x="0.95" y="6.05" width="18.95" height="12.55" rx="0.8" fill="#c0c0c0"/>
<circle cx="15.87" cy="13.22" r="6.5" fill="#242424"/>
<path d="M12.6 17L9 20.8" stroke="#242424" stroke-width="3.8" stroke-linecap="round"/>
<circle cx="15.87" cy="13.22" r="4.5" fill="none" stroke="#c8c8c8" stroke-width="1.3"/>
<path d="M12.5 17.1L9.2 20.6" stroke="#c8c8c8" stroke-width="1.5" stroke-linecap="round"/>
</svg>
<span class="t" style="left:33.1px;top:984.0px;font-size:13px;color:#c0c0c0;transform:scaleX(0.9773);">Content</span><span class="t" style="left:80.2px;top:984.0px;font-size:13px;color:#c0c0c0;transform:scaleX(1.0060);">Drawer</span>
<svg style="left:146.5px;top:981.5px" width="13" height="17" viewBox="0 0 13 17">
<path d="M0.4 1.4H2.6V4.2H5.3V1.4H7.6V4.2H10.3V1.4H12.7V16.65H0.4Z" fill="#c4c4c4"/>
<path d="M3.95 0.1V3.4M8.95 0.1V3.4" stroke="#9a9a9a" stroke-width="1"/>
<path d="M2.7 7.9L6.1 10.45L2.7 13.1" fill="none" stroke="#1c1c1c" stroke-width="1.7"/>
<path d="M6.7 13H10.4" stroke="#1c1c1c" stroke-width="1.1"/>
</svg>
<span class="t" style="left:165.3px;top:984.0px;font-size:13px;color:#c0c0c0;transform:scaleX(0.8962);">Output</span><span class="t" style="left:205.9px;top:984.0px;font-size:13px;color:#c0c0c0;transform:scaleX(1.0139);">Log</span>
<svg style="left:252.5px;top:983.5px" width="17" height="14" viewBox="0 0 17 14">
<rect x="1" y="1" width="15.1" height="12" fill="#1b1b1b" stroke="#c8c8c8" stroke-width="1"/>
<rect x="0.5" y="0.5" width="16.1" height="3" fill="#c8c8c8"/>
<path d="M3.6 5L7.9 7.55L3.6 10.2" fill="none" stroke="#c0c0c0" stroke-width="1.25" stroke-linecap="round"/>
<path d="M9.5 10H13.6" stroke="#c8c8c8" stroke-width="1.2"/>
</svg>
<span class="t" style="left:273.2px;top:984.0px;font-size:13px;color:#c0c0c0;transform:scaleX(0.9627);">Cmd</span>
<svg style="left:305.5px;top:986.5px" width="11" height="8" viewBox="0 0 11 8"><path d="M1.2 1.4L5.5 5.8L9.8 1.4" fill="none" stroke="#c0c0c0" stroke-width="1.5"/></svg>
<div class="a" style="left:329.3px;top:979px;width:267.2px;height:22px;background:#0f0f0f;border:1px solid #383838;border-radius:4.5px;"></div>
<span class="t m" style="left:337.8px;top:982.7px;font-size:12px;color:#585858;transform:scaleX(0.9760);">Enter Console Command</span>
<svg style="left:1536px;top:982px" width="17" height="17" viewBox="0 0 17 17"><circle cx="8.47" cy="8" r="6.75" fill="none" stroke="#c4c4c4" stroke-width="1.6"/><path d="M3.9 12.5L13.1 3.4" stroke="#c4c4c4" stroke-width="1.6"/></svg>
<span class="t" style="left:1558.2px;top:983.9px;font-size:13px;color:#c0c0c0;transform:scaleX(0.9788);">Source</span><span class="t" style="left:1602.2px;top:983.9px;font-size:13px;color:#c0c0c0;transform:scaleX(0.9782);">Control</span><span class="t" style="left:1645.8px;top:983.9px;font-size:13px;color:#c0c0c0;transform:scaleX(1.0216);">Off</span>
<svg style="left:1663px;top:993px" width="8" height="8" viewBox="0 0 8 8"><path d="M7.4 0.6V6.8H0.8Q5.8 5.8 7.4 0.6Z" fill="#767676"/></svg>
</div>
</body></html>
